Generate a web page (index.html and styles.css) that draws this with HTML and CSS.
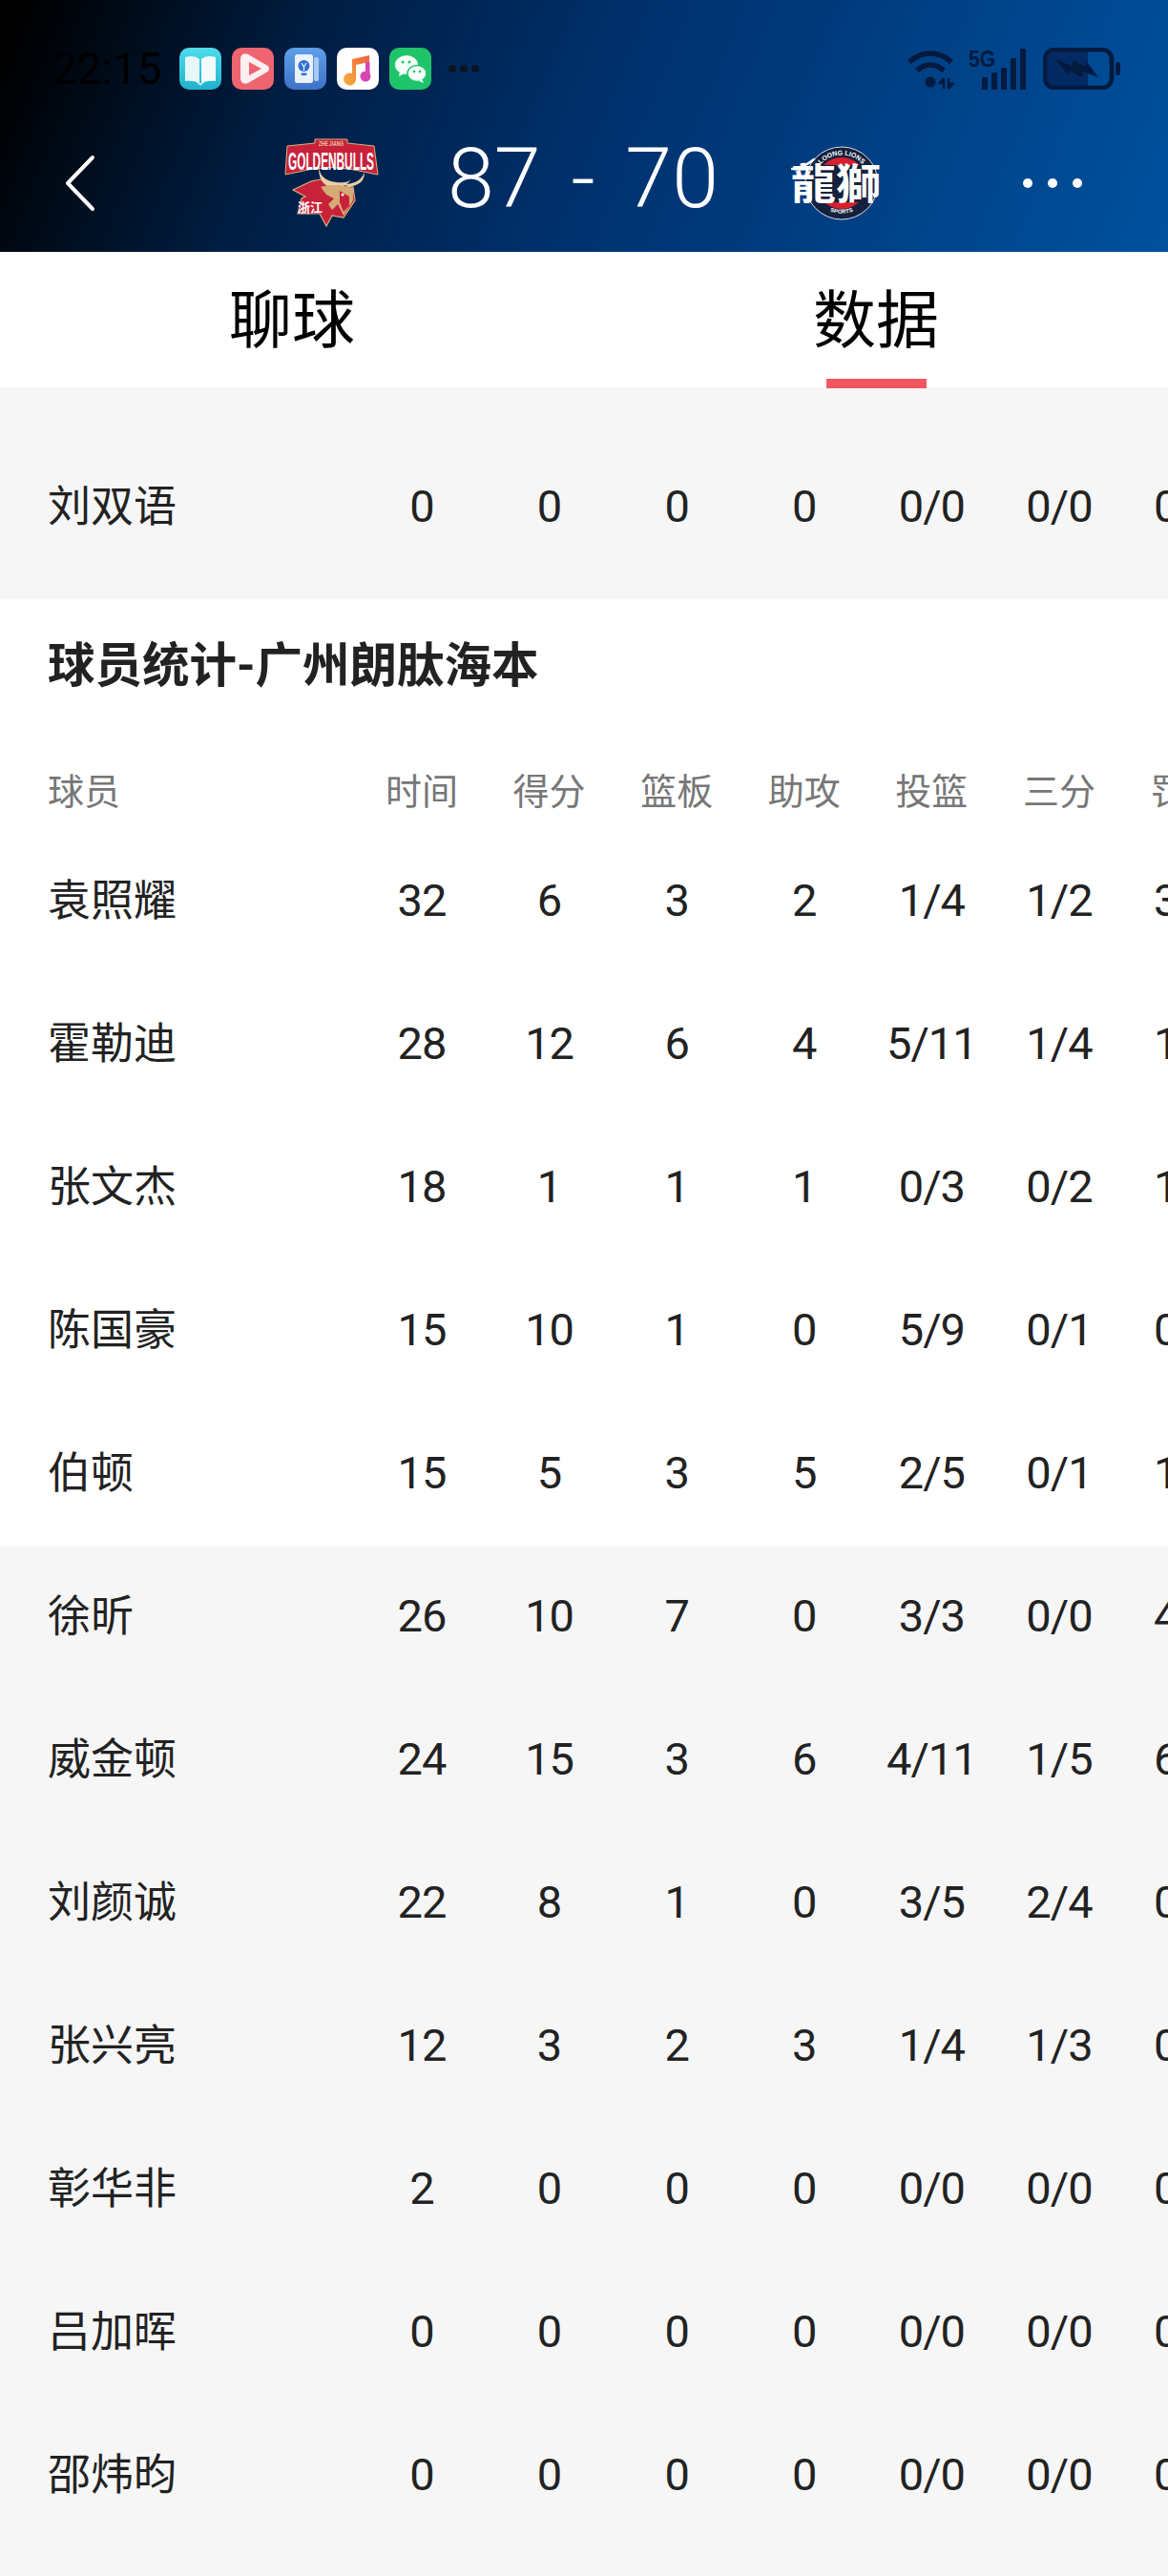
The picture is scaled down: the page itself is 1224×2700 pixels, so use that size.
FILE: index.html
```html
<!DOCTYPE html>
<html lang="zh-CN">
<head>
<meta charset="utf-8">
<title>比赛数据</title>
<link rel="stylesheet" href="styles.css">
</head>
<body>
<div class="page">
  <header class="hero">
    <div class="status">
      <span class="time">22:15</span>
      <div class="apps">
        <svg class="app" viewBox="0 0 44 44"><defs><linearGradient id="g1" x1="0" y1="0" x2="0" y2="1"><stop offset="0" stop-color="#4fdcec"/><stop offset="1" stop-color="#1fb2cc"/></linearGradient></defs><rect width="44" height="44" rx="10" fill="url(#g1)"/><path d="M6 10C12 8 18 9 21 12V38C18 35 12 34 6 35Z" fill="#e6f6f9"/><path d="M38 10C32 8 26 9 23 12V38C26 35 32 34 38 35Z" fill="#f4fbfc"/><path d="M19 37h6l-3 3z" fill="#bfe9f0"/></svg>
        <svg class="app" viewBox="0 0 44 44"><rect width="44" height="44" rx="10" fill="#ee6470"/><path d="M9 12C9 7 13 5 17 7L36 18C40 20 40 24 36 26L17 37C13 39 9 37 9 32Z" fill="#fdeef0"/><path d="M18 15L31 22L18 29Z" fill="#ee6470"/></svg>
        <svg class="app" viewBox="0 0 44 44"><defs><linearGradient id="g3" x1="0" y1="0" x2="0" y2="1"><stop offset="0" stop-color="#5f9fe8"/><stop offset="1" stop-color="#3e72c8"/></linearGradient></defs><rect width="44" height="44" rx="10" fill="url(#g3)"/><rect x="31" y="10" width="5" height="25" rx="1.5" fill="#a9c9f1"/><rect x="11" y="7" width="19" height="30" rx="2.5" fill="#e9f1fb"/><circle cx="20.500" cy="19" r="6" fill="#2f6fd0"/><path d="M18 16l2.500 4 2.500-4M20.500 20v4" stroke="#e9f1fb" stroke-width="1.300" fill="none"/><rect x="17.500" y="26.500" width="6" height="2.500" rx="1" fill="#2f6fd0"/></svg>
        <svg class="app" viewBox="0 0 44 44"><defs><linearGradient id="g4" x1="0" y1="1" x2="1" y2="0"><stop offset="0" stop-color="#f6b13c"/><stop offset="1" stop-color="#f0603c"/></linearGradient></defs><rect width="44" height="44" rx="10" fill="#fff"/><path d="M16 12L34 8V15L20 18V33A6.500 6.500 0 1 1 16 27Z" fill="url(#g4)"/><circle cx="30" cy="30" r="5.500" fill="#d944b4"/><path d="M30 15h4.500v15H30z" fill="#d944b4"/></svg>
        <svg class="app" viewBox="0 0 44 44"><rect width="44" height="44" rx="10" fill="#1fc46a"/><ellipse cx="18" cy="18" rx="12" ry="10" fill="#f4fff8"/><path d="M11 25l-1 5 6-3z" fill="#f4fff8"/><ellipse cx="29" cy="27" rx="10" ry="8.500" fill="#f4fff8" stroke="#1fc46a" stroke-width="1.500"/><path d="M34 33l2 4-5-2z" fill="#f4fff8"/><circle cx="14" cy="15" r="1.500" fill="#1fc46a"/><circle cx="21" cy="15" r="1.500" fill="#1fc46a"/><circle cx="26" cy="25" r="1.300" fill="#1fc46a"/><circle cx="32" cy="25" r="1.300" fill="#1fc46a"/></svg>
      </div>
      <div class="more-apps"><i></i><i></i><i></i></div>
      <div class="sys">
        <svg class="wifi" viewBox="0 0 50 44"><g fill="none" stroke="#041a3e" stroke-width="5.500"><path d="M2 15C15 3 33 3 46 15"/><path d="M10 24C18 16 30 16 38 24"/></g><circle cx="24" cy="36" r="5.500" fill="#041a3e"/><path d="M38 32v11M38 32l-4 5h4M43 43V32M43 43l4-5h-4" stroke="#041a3e" stroke-width="2.500" fill="none"/></svg>
        <svg class="signal" viewBox="0 0 62 44"><text x="0" y="20" class="five-g" textLength="28" lengthAdjust="spacingAndGlyphs">5G</text><g fill="#041a3e"><rect x="14" y="31" width="6" height="13" rx="1"/><rect x="24" y="26" width="6" height="18" rx="1"/><rect x="34" y="21" width="6" height="23" rx="1"/><rect x="44" y="11" width="6" height="33" rx="1"/><rect x="54" y="1" width="6" height="43" rx="1"/></g></svg>
        <svg class="battery" viewBox="0 0 82 44"><path d="M12 3H47V41H12A9 9 0 0 1 3 32V12A9 9 0 0 1 12 3Z" fill="#032a63"/><rect x="2" y="2" width="70" height="40" rx="10" fill="none" stroke="#041a3e" stroke-width="4.500"/><path d="M13 12L30 19L32 13L44 20L46 15L58 31L42 25L40 31L28 24L26 28Z" fill="#041a3e"/><rect x="76" y="15" width="5" height="14" rx="2.500" fill="#041a3e"/></svg>
      </div>
    </div>
    <nav class="nav">
      <svg class="back" viewBox="0 0 32 60"><path d="M29 3L3 30L29 57" fill="none" stroke="#fff" stroke-width="4" stroke-linecap="round" stroke-linejoin="round"/></svg>
      <svg class="bulls" viewBox="0 0 100 95">
        <path d="M32 2H66V6L94 9L98 39L68 33Q48 30 30 33L1 39L3 9L32 6Z" fill="#c8213a" stroke="#d9b27c" stroke-width="1"/>
        <text x="49" y="8.500" class="zhe" text-anchor="middle" textLength="26" lengthAdjust="spacingAndGlyphs">ZHE JIANG</text>
        <text x="4" y="34" class="gb" textLength="90" lengthAdjust="spacingAndGlyphs">GOLDENBULLS</text>
        <path d="M9 55L28 46L38 44L52 50L72 52L74 66L62 84L50 82L44 93L37 80L14 80L18 64L22 62Z" fill="#c8213a" stroke="#d9b27c" stroke-width="1.200"/>
        <path d="M37 29C35 38 42 46 54 47C64 48 68 46 70 44C64 52 56 54 48 52C40 50 34 40 37 29Z" fill="#e8cfa6"/>
        <path d="M84 37C84 46 78 50 68 52L62 49C72 49 80 46 84 37Z" fill="#e8cfa6"/>
        <path d="M38 52L46 50L58 50L72 53L72 66L66 76L62 82L56 70L50 76L46 70L52 64L44 60Z" fill="#d4ab76"/>
        <path d="M58 56L68 62L68 72L62 78L58 68Z" fill="#c8213a"/>
        <circle cx="61" cy="60" r="1.500" fill="#fff"/>
        <text x="14" y="78" class="zj" textLength="26" lengthAdjust="spacingAndGlyphs">浙江</text>
      </svg>
      <div class="score"><span>87</span><span>-</span><span>70</span></div>
      <svg class="lions" viewBox="0 0 95 80">
        <defs>
          <path id="arcTop" d="M23.500 40A29.500 29.500 0 0 1 82.500 40"/>
          <path id="arcBottom" d="M22 50A33 33 0 0 0 84 50"/>
          <clipPath id="band"><circle cx="53" cy="40" r="27"/></clipPath>
        </defs>
        <circle cx="53" cy="40" r="38" fill="#15203c" stroke="#d8dce6" stroke-width="1"/>
        <circle cx="53" cy="40" r="27" fill="#d81f2e"/>
        <rect x="20" y="21" width="66" height="39" fill="#15203c" clip-path="url(#band)"/>
        <text class="loong" text-anchor="middle"><textPath href="#arcTop" startOffset="50%">LOONG LIONS</textPath></text>
        <text class="sports" text-anchor="middle"><textPath href="#arcBottom" startOffset="50%">SPORTS</textPath></text>
        <path d="M1 25C10 24 18 20 24 15" fill="none" stroke="#fff" stroke-width="2.500" stroke-linecap="round"/>
        <text x="0" y="57" class="ll" textLength="94" lengthAdjust="spacingAndGlyphs">龍獅</text>
      </svg>
      <div class="dots"><i></i><i></i><i></i></div>
    </nav>
  </header>

  <div class="tabs">
    <div class="tab">聊球</div>
    <div class="tab tab-active">数据</div>
  </div>

  <section class="band band-top">
    <div class="row"><div class="name">刘双语</div><div>0</div><div>0</div><div>0</div><div>0</div><div>0/0</div><div>0/0</div><div>0/0</div></div>
  </section>

  <section class="band band-white">
    <h2 class="title">球员统计-广州朗肽海本</h2>
    <div class="row row-head"><div class="name">球员</div><div>时间</div><div>得分</div><div>篮板</div><div>助攻</div><div>投篮</div><div>三分</div><div>罚球</div></div>
    <div class="row"><div class="name">袁照耀</div><div>32</div><div>6</div><div>3</div><div>2</div><div>1/4</div><div>1/2</div><div>3/4</div></div>
    <div class="row"><div class="name">霍勒迪</div><div>28</div><div>12</div><div>6</div><div>4</div><div>5/11</div><div>1/4</div><div>1/2</div></div>
    <div class="row"><div class="name">张文杰</div><div>18</div><div>1</div><div>1</div><div>1</div><div>0/3</div><div>0/2</div><div>1/2</div></div>
    <div class="row"><div class="name">陈国豪</div><div>15</div><div>10</div><div>1</div><div>0</div><div>5/9</div><div>0/1</div><div>0/0</div></div>
    <div class="row"><div class="name">伯顿</div><div>15</div><div>5</div><div>3</div><div>5</div><div>2/5</div><div>0/1</div><div>1/2</div></div>
  </section>

  <section class="band band-bench">
    <div class="row row-first"><div class="name">徐昕</div><div>26</div><div>10</div><div>7</div><div>0</div><div>3/3</div><div>0/0</div><div>4/4</div></div>
    <div class="row"><div class="name">威金顿</div><div>24</div><div>15</div><div>3</div><div>6</div><div>4/11</div><div>1/5</div><div>6/6</div></div>
    <div class="row"><div class="name">刘颜诚</div><div>22</div><div>8</div><div>1</div><div>0</div><div>3/5</div><div>2/4</div><div>0/0</div></div>
    <div class="row"><div class="name">张兴亮</div><div>12</div><div>3</div><div>2</div><div>3</div><div>1/4</div><div>1/3</div><div>0/0</div></div>
    <div class="row"><div class="name">彰华非</div><div>2</div><div>0</div><div>0</div><div>0</div><div>0/0</div><div>0/0</div><div>0/0</div></div>
    <div class="row"><div class="name">吕加晖</div><div>0</div><div>0</div><div>0</div><div>0</div><div>0/0</div><div>0/0</div><div>0/0</div></div>
    <div class="row"><div class="name">邵炜昀</div><div>0</div><div>0</div><div>0</div><div>0</div><div>0/0</div><div>0/0</div><div>0/0</div></div>
  </section>
</div>
</body>
</html>
```
FILE: styles.css
```css
* { box-sizing: border-box; }
html, body { margin: 0; padding: 0; background: #f6f6f7; }
body { font-family: Roboto, "Noto Sans CJK SC", sans-serif; color: #222; }
.page { width: 1224px; height: 2700px; overflow: hidden; }

.hero { height: 264px; padding-top: 50px; background: linear-gradient(112deg, #000 2%, #001d42 25%, #00316e 52%, #00519f 100%); }
.status { height: 44px; display: flex; align-items: center; padding-left: 55px; }
.time { width: 133px; font-size: 46px; line-height: 44px; color: #000; }
.apps { display: flex; gap: 11px; }
.app { width: 44px; height: 44px; display: block; }
.more-apps { display: flex; gap: 4px; margin-left: 18px; }
.more-apps i { width: 8px; height: 8px; border-radius: 50%; background: #0b1420; }
.sys { display: flex; align-items: center; margin-left: 449px; }
.wifi { width: 50px; height: 44px; }
.signal { width: 62px; height: 44px; margin-left: 14px; }
.battery { width: 82px; height: 44px; margin-left: 16px; }
.five-g { font: 700 24px "Liberation Sans", sans-serif; fill: #041a3e; }

.nav { height: 93px; margin-top: 51px; padding-left: 68px; display: flex; align-items: center; }
.back { width: 32px; height: 60px; flex: none; margin-right: 198px; }
.bulls { width: 100px; height: 95px; flex: none; }
.score { width: 284px; margin-left: 71px; padding-bottom: 10px; display: flex; justify-content: space-between; font-size: 88px; font-weight: 300; line-height: 93px; color: #fff; flex: none; }
.lions { width: 95px; height: 80px; margin-left: 76px; flex: none; }
.dots { display: flex; gap: 16px; margin-left: 148px; }
.dots i { width: 10px; height: 10px; border-radius: 50%; background: #fff; }

.zhe { font: 700 7px "Liberation Sans", sans-serif; fill: #e9c9a0; }
.gb { font: 700 26px "Liberation Sans", sans-serif; fill: #fff; }
.zj { font: 700 13px "Noto Sans CJK SC", sans-serif; fill: #fff; }
.loong { font: 700 7px "Liberation Sans", sans-serif; fill: #fff; }
.sports { font: 700 6px "Liberation Sans", sans-serif; fill: #fff; }
.ll { font: 700 44px "Noto Sans CJK TC", sans-serif; fill: #fff; }

.tabs { height: 142px; display: flex; background: #fff; position: relative; z-index: 1; }
.tab { flex: 1; display: flex; align-items: center; justify-content: center; padding-bottom: 10px; font-size: 66px; color: #000; position: relative; }
.tab-active::after { content: ""; position: absolute; left: 254px; bottom: -1px; width: 105px; height: 10px; background: #f2575f; }

.band-top { height: 222px; padding-top: 49px; background: #f6f6f7; }
.band-white { padding-top: 30px; padding-bottom: 3px; background: #fff; }
.band-bench { background: #f6f6f7; }

.row { height: 150px; padding-left: 51px; padding-top: 1px; display: grid; grid-template-columns: 324.2px repeat(7, 133.6px); align-items: center; justify-items: center; font-size: 47px; letter-spacing: -1px; white-space: nowrap; overflow: hidden; }
.row .name { justify-self: start; margin-left: -1px; padding-bottom: 6px; font-size: 45px; letter-spacing: 0; }
.row-first { height: 147px; padding-bottom: 3px; padding-top: 1px; }
.row-head { height: 80px; margin-top: 50px; color: #777; padding-top: 0; }
.row-head > div { font-size: 38px; letter-spacing: 0; padding-bottom: 4px; }
.row-head .name { font-size: 38px; padding-bottom: 4px; }
.title { height: 80px; margin: 0; padding-left: 50px; font-size: 49.5px; line-height: 80px; font-weight: 700; color: #222; }
```
